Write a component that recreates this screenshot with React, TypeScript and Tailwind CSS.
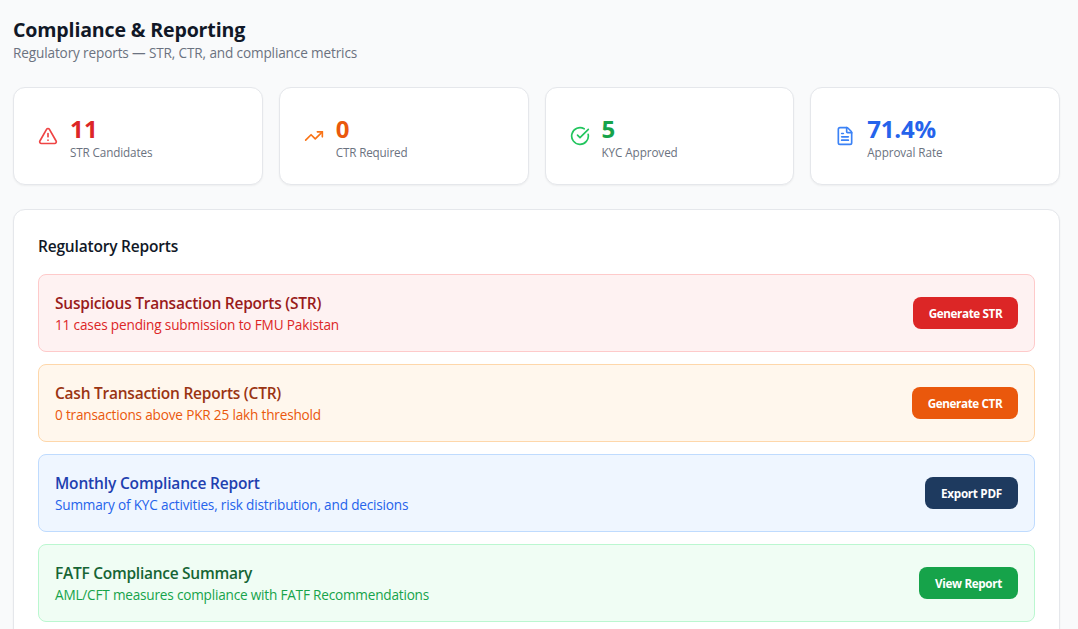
import { CircleCheckBig, FileText, TrendingUp, TriangleAlert } from "lucide-react";

const stats = [
    {
        label: "STR Candidates",
        value: "11",
        icon: TriangleAlert,
        iconColor: "text-[#ef4444]",
        valueStyle: "tracking-[0.2px] text-[#dc2626]",
        labelTracking: "tracking-[-0.13px]",
    },
    {
        label: "CTR Required",
        value: "0",
        icon: TrendingUp,
        iconColor: "text-[#f97316]",
        valueStyle: "text-[#ea580c]",
        labelTracking: "tracking-[-0.16px]",
    },
    {
        label: "KYC Approved",
        value: "5",
        icon: CircleCheckBig,
        iconColor: "text-[#22c55e]",
        valueStyle: "text-[#16a34a]",
        labelTracking: "tracking-[-0.08px]",
    },
    {
        label: "Approval Rate",
        value: "71.4%",
        icon: FileText,
        iconColor: "text-[#3b82f6]",
        valueStyle: "tracking-[-0.2px] text-[#2563eb]",
        labelTracking: "tracking-[-0.08px]",
    },
];

const reports = [
    {
        title: "Suspicious Transaction Reports (STR)",
        detail: "11 cases pending submission to FMU Pakistan",
        action: "Generate STR",
        box: "border-[#fecaca] bg-[#fef2f2]",
        titleStyle: "tracking-[-0.23px] text-[#991b1b]",
        detailStyle: "tracking-[-0.16px] text-[#dc2626]",
        button: "w-[105px] tracking-[-0.4px] bg-[#dc2626] hover:bg-[#b91c1c]",
    },
    {
        title: "Cash Transaction Reports (CTR)",
        detail: "0 transactions above PKR 25 lakh threshold",
        action: "Generate CTR",
        box: "border-[#fed7aa] bg-[#fff7ed]",
        titleStyle: "tracking-[-0.24px] text-[#9a3412]",
        detailStyle: "tracking-[-0.18px] text-[#ea580c]",
        button: "w-[106px] tracking-[-0.4px] bg-[#ea580c] hover:bg-[#c2410c]",
    },
    {
        title: "Monthly Compliance Report",
        detail: "Summary of KYC activities, risk distribution, and decisions",
        action: "Export PDF",
        box: "border-[#bfdbfe] bg-[#eff6ff]",
        titleStyle: "tracking-[-0.16px] text-[#1e40af]",
        detailStyle: "tracking-[-0.18px] text-[#2563eb]",
        button: "w-[93px] tracking-[-0.3px] bg-[#1e3a5f] hover:bg-[#172e4c]",
    },
    {
        title: "FATF Compliance Summary",
        detail: "AML/CFT measures compliance with FATF Recommendations",
        action: "View Report",
        box: "border-[#bbf7d0] bg-[#f0fdf4]",
        titleStyle: "tracking-[-0.27px] text-[#166534]",
        detailStyle: "tracking-[-0.2px] text-[#16a34a]",
        button: "w-[99px] tracking-[-0.36px] bg-[#16a34a] hover:bg-[#15803d]",
    },
];

export default function App() {
    return (
        <div className="h-screen overflow-hidden bg-[#f9fafb] pt-[15px] pr-[18px] pl-[13px] font-['Segoe_UI','Open_Sans',sans-serif]">
            <div className="space-y-6">
                {/* Header */}
                <div className="pb-0.5">
                    <h1 className="text-[19.6px] leading-[30px] font-bold tracking-[-0.17px] text-[#111827]">
                        Compliance &amp; Reporting
                    </h1>
                    <p className="text-[13.6px] leading-4 tracking-[-0.14px] text-[#6b7280]">
                        Regulatory reports — STR, CTR, and compliance metrics
                    </p>
                </div>

                {/* Stats */}
                <div className="grid grid-cols-4 gap-4">
                    {stats.map((s) => (
                        <div key={s.label} className="rounded-xl border border-[#e5e7eb] bg-white p-6 shadow-xs">
                            <div className="flex items-center gap-3">
                                <s.icon className={`size-5 shrink-0 ${s.iconColor}`} />
                                <div className="pb-0.5 whitespace-nowrap">
                                    <p className={`text-2xl leading-[34px] font-bold ${s.valueStyle}`}>{s.value}</p>
                                    <p className={`text-[11.7px] leading-3 text-[#6b7280] ${s.labelTracking}`}>
                                        {s.label}
                                    </p>
                                </div>
                            </div>
                        </div>
                    ))}
                </div>

                {/* Reports */}
                <div className="rounded-xl border border-[#e5e7eb] bg-white p-6 shadow-xs">
                    <h3 className="mb-4 text-[15.5px] leading-6 font-semibold tracking-[-0.19px] text-[#111827]">
                        Regulatory Reports
                    </h3>
                    <div className="space-y-3">
                        {reports.map((r) => (
                            <div key={r.title} className={`flex items-center justify-between rounded-lg border p-4 ${r.box}`}>
                                <div className="whitespace-nowrap">
                                    <p className={`text-[15.5px] leading-6 font-semibold ${r.titleStyle}`}>{r.title}</p>
                                    <p className={`text-[13.6px] leading-5 ${r.detailStyle}`}>{r.detail}</p>
                                </div>
                                <button
                                    type="button"
                                    className={`h-8 rounded-lg pt-0.5 text-center text-[11.7px] font-bold whitespace-nowrap text-white ${r.button}`}
                                >
                                    {r.action}
                                </button>
                            </div>
                        ))}
                    </div>
                </div>
            </div>
        </div>
    );
}
